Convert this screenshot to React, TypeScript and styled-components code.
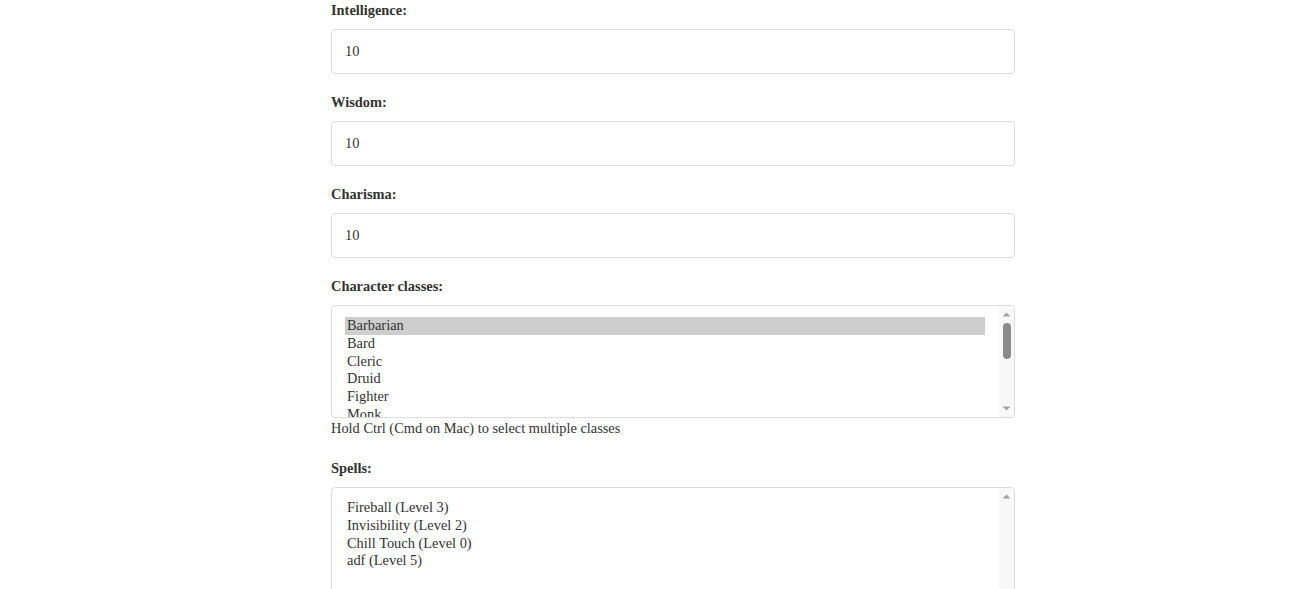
import React, { useState } from "react";
import styled, { createGlobalStyle } from "styled-components";

const GlobalStyle = createGlobalStyle`
  html, body {
    margin: 0;
    padding: 0;
    background: #ffffff;
    font-family: "Liberation Serif", "Times New Roman", serif;
    color: #333333;
  }
`;

const Page = styled.div`
  padding: 2px 297px 0 331px;
  overflow: hidden;
  height: 589px;
  box-sizing: border-box;
`;

const Form = styled.form`
  display: flex;
  flex-direction: column;
  width: 684px;
`;

const Field = styled.div<{ $gap?: number }>`
  display: flex;
  flex-direction: column;
  margin-bottom: ${(p) => p.$gap ?? 20}px;
`;

const Label = styled.label`
  display: block;
  font-weight: bold;
  font-size: 14.4px;
  line-height: 16px;
  color: #333333;
  margin-bottom: 11px;
`;

const TextInput = styled.input`
  box-sizing: border-box;
  width: 100%;
  height: 45px;
  padding: 0 13px;
  border: 1px solid #dddddd;
  border-radius: 4px;
  font-family: "Liberation Serif", "Times New Roman", serif;
  font-size: 14.4px;
  color: #333333;
  background: #ffffff;
  outline: none;
`;

const ListFrame = styled.div<{ $h: number }>`
  box-sizing: border-box;
  display: flex;
  width: 100%;
  height: ${(p) => p.$h}px;
  border: 1px solid #dddddd;
  border-radius: 4px;
  background: #ffffff;
  overflow: hidden;
`;

const ListViewport = styled.div`
  flex: 1;
  min-width: 0;
  padding: 11px 14px 0 13px;
  overflow: hidden;
`;

const OptionRow = styled.div<{ $selected: boolean }>`
  height: 17.8px;
  line-height: 17.8px;
  padding: 0 2px;
  font-size: 14.4px;
  color: #333333;
  white-space: nowrap;
  cursor: default;
  background: ${(p) => (p.$selected ? "#cecece" : "transparent")};
`;

const ScrollBar = styled.div`
  width: 15px;
  flex: none;
  display: flex;
  flex-direction: column;
  background: #f8f8f8;
`;

const ArrowButton = styled.div`
  height: 17px;
  flex: none;
  display: flex;
  align-items: center;
  justify-content: center;
`;

const Track = styled.div`
  flex: 1;
  display: flex;
  flex-direction: column;
  align-items: center;
`;

const Thumb = styled.div`
  width: 8px;
  border-radius: 4px;
  background: #8a8a8a;
`;

const Hint = styled.small`
  display: block;
  font-size: 14.4px;
  line-height: 16px;
  color: #333333;
  margin-top: 2px;
`;

const Arrow = ({ up }: { up?: boolean }) => (
  <svg width="9" height="5" viewBox="0 0 9 5">
    <polygon
      points={up ? "0.5,4.5 8.5,4.5 4.5,0.5" : "0.5,0.5 8.5,0.5 4.5,4.5"}
      fill="#a3a3a3"
    />
  </svg>
);

type ListProps = {
  items: string[];
  selected: string[];
  onToggle: (v: string) => void;
  height: number;
  thumb?: number;
};

function MultiList({ items, selected, onToggle, height, thumb }: ListProps) {
  return (
    <ListFrame $h={height} role="listbox" aria-multiselectable="true">
      <ListViewport>
        {items.map((it) => (
          <OptionRow
            key={it}
            role="option"
            aria-selected={selected.includes(it)}
            $selected={selected.includes(it)}
            onClick={() => onToggle(it)}
          >
            {it}
          </OptionRow>
        ))}
      </ListViewport>
      <ScrollBar>
        <ArrowButton>
          <Arrow up />
        </ArrowButton>
        <Track>{thumb ? <Thumb style={{ height: thumb }} /> : null}</Track>
        <ArrowButton>
          <Arrow />
        </ArrowButton>
      </ScrollBar>
    </ListFrame>
  );
}

const classes = [
  "Barbarian",
  "Bard",
  "Cleric",
  "Druid",
  "Fighter",
  "Monk",
  "Paladin",
  "Ranger",
  "Rogue",
  "Sorcerer",
  "Warlock",
  "Wizard",
];

const spells = [
  "Fireball (Level 3)",
  "Invisibility (Level 2)",
  "Chill Touch (Level 0)",
  "adf (Level 5)",
];

export default function App() {
  const [picked, setPicked] = useState<string[]>(["Barbarian"]);
  const [chosenSpells, setChosenSpells] = useState<string[]>([]);

  const toggle =
    (list: string[], set: (v: string[]) => void) => (v: string) =>
      set(list.includes(v) ? list.filter((x) => x !== v) : [...list, v]);

  const visible = 111;
  const content = classes.length * 17.8 + 22;
  const trackLen = visible - 34;
  const thumbLen = Math.round((visible / content) * trackLen);

  return (
    <>
      <GlobalStyle />
      <Page>
        <Form onSubmit={(e) => e.preventDefault()}>
          {["Intelligence", "Wisdom", "Charisma"].map((name) => (
            <Field key={name}>
              <Label htmlFor={name}>{name}:</Label>
              <TextInput id={name} type="number" defaultValue={10} />
            </Field>
          ))}
          <Field $gap={24}>
            <Label>Character classes:</Label>
            <MultiList
              items={classes}
              selected={picked}
              onToggle={toggle(picked, setPicked)}
              height={113}
              thumb={thumbLen}
            />
            <Hint>Hold Ctrl (Cmd on Mac) to select multiple classes</Hint>
          </Field>
          <Field>
            <Label>Spells:</Label>
            <MultiList
              items={spells}
              selected={chosenSpells}
              onToggle={toggle(chosenSpells, setChosenSpells)}
              height={150}
            />
          </Field>
        </Form>
      </Page>
    </>
  );
}
